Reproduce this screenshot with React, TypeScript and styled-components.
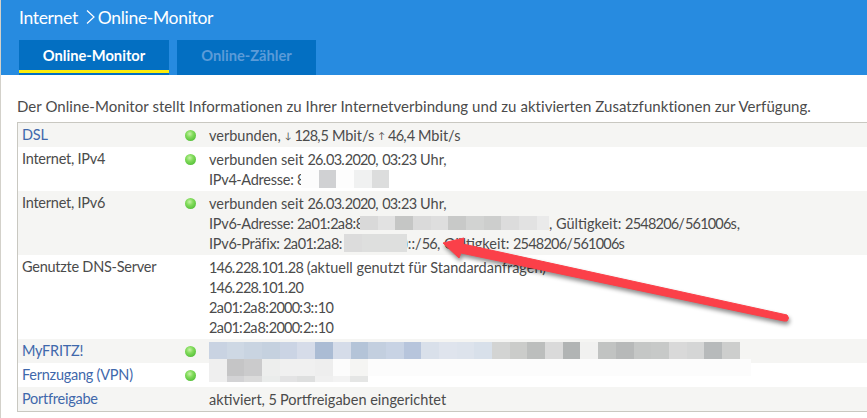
import React from 'react';
import styled, { createGlobalStyle } from 'styled-components';

const Global = createGlobalStyle`
    html, body {
        margin: 0;
        padding: 0;
        background: #fff;
        overflow: hidden;
    }
    body {
        font-family: "Lato", "Liberation Sans", sans-serif;
        color: #4b4b4b;
    }
`;

const Page = styled.div`
    position: relative;
    width: 867px;
    height: 418px;
    box-sizing: border-box;
    border-left: 1px solid #d3d1ca;
    overflow: hidden;
`;

const Header = styled.header`
    height: 75px;
    background: #278be0;
    padding: 0 0 0 18px;
    display: flex;
    flex-direction: column;
    box-sizing: border-box;
`;

const Crumbs = styled.div`
    height: 40px;
    display: flex;
    align-items: center;
    color: #fff;
    font-size: 17.5px;
    letter-spacing: -0.33px;
    padding-bottom: 6px;
    box-sizing: border-box;
`;

const Tabs = styled.nav`
    display: flex;
    gap: 8px;
`;

const Tab = styled.div<{ $active?: boolean; $w: number }>`
    width: ${p => p.$w}px;
    height: 35px;
    box-sizing: border-box;
    background: #036fc2;
    color: ${p => (p.$active ? '#fff' : '#5b9bd8')};
    font-size: 14.7px;
    font-weight: 700;
    display: flex;
    align-items: center;
    justify-content: center;
    padding-bottom: 5px;
    position: relative;
    &::after {
        content: '';
        display: ${p => (p.$active ? 'block' : 'none')};
        position: absolute;
        left: 0;
        right: 0;
        top: 30px;
        height: 3px;
        background: #fdec0b;
    }
`;

const Content = styled.main`
    padding: 22px 0 0 16px;
`;

const Intro = styled.p`
    margin: 0 0 6px;
    height: 19px;
    line-height: 19px;
    font-size: 15px;
    letter-spacing: 0.05px;
    white-space: nowrap;
`;

const Table = styled.div`
    border: 1px solid #c9c8c1;
    border-right: 0;
`;

const Row = styled.div<{ $odd?: boolean }>`
    display: grid;
    grid-template-columns: 167px 24px 1fr;
    padding: 2px 0;
    background: ${p => (p.$odd ? '#f5f5f3' : '#fff')};
`;

const Label = styled.div<{ $link?: boolean }>`
    padding-left: 4px;
    line-height: 20px;
    font-size: 14.5px;
    letter-spacing: -0.25px;
    color: ${p => (p.$link ? '#3f68ab' : '#4b4b4b')};
`;

const LedCell = styled.div`
    height: 20px;
    display: flex;
    align-items: center;
`;

const Led = styled.span`
    width: 11px;
    height: 11px;
    border-radius: 50%;
    background: radial-gradient(circle at 42% 35%, #c6f2a8 0, #83dc5c 35%, #58c23c 75%, #4aa938 100%);
`;

const Values = styled.div`
    min-width: 0;
`;

const Line = styled.div`
    height: 20px;
    display: flex;
    align-items: center;
    font-size: 14.5px;
    white-space: pre;
`;

const Digits = styled.span`
    letter-spacing: -0.8px;
`;

const ArrowGlyph = styled.span`
    font-size: 9px;
    margin: 0 3px 0 4px;
`;

// text that runs on under the blur, the blur is painted over its end
const Lead = styled.span<{ $w: number }>`
    flex: none;
    width: ${p => p.$w}px;
    letter-spacing: -0.25px;
`;

const Tail = styled.span`
    margin-left: -3px;
`;

const Mosaic = styled.span<{ $h: number }>`
    position: relative;
    display: flex;
    flex: none;
    height: ${p => p.$h}px;
    overflow: hidden;
`;

const Tile = styled.span<{ $w?: number }>`
    flex: none;
    width: ${p => p.$w ?? 17.7}px;
    height: 100%;
`;

const Stack = styled.div`
    display: flex;
    flex-direction: column;
    margin-top: -6px;
    position: relative;
    height: 24px;
`;

const Arrow = styled.svg`
    position: absolute;
    left: -1px;
    top: 0;
    width: 867px;
    height: 418px;
    pointer-events: none;
    filter: drop-shadow(1px 3px 2px rgba(0, 0, 0, 0.45));
`;

const Num = ({ children }: { children: string }) => (
    <span>
        {children.split(/(\d+)/).map((part, i) => (i % 2 ? <Digits key={i}>{part}</Digits> : part))}
    </span>
);

const Tiles = ({ colors, h, widths }: { colors: string[]; h: number; widths?: number[] }) => (
    <Mosaic $h={h}>
        {colors.map((c, i) => (
            <Tile key={i} $w={widths?.[i]} style={{ background: c }} />
        ))}
    </Mosaic>
);

const fritz = [
    '#c9d3e2', '#ced8e4', '#c9d4e1', '#c5d1df', '#cbd4e4', '#d6dce9', '#abbcd4', '#d5dce9', '#b4c4d8', '#c3cfdf',
    '#c8d3e4', '#b7c5dc', '#d9e0ea', '#dfe4ed', '#dde3ec', '#d8e0ea', '#d3d4d3', '#cbccca', '#bcbebd', '#dadada',
    '#b1b4b4', '#f1f1f0', '#c1c3c2', '#b7b9b9', '#c5c7c6', '#c7c9c8', '#d9d9d9', '#d5d6d6', '#b7babb', '#cdcecd',
];

export default function App() {
    return (
        <Page>
            <Global />
            <Header>
                <Crumbs>
                    Internet
                    <svg width="12" height="16" viewBox="0 0 12 16" style={{ margin: '0 1px 0 7px' }}>
                        <path d="M2 1.5 L9 8 L2 14.5" fill="none" stroke="#fff" strokeWidth="1.2" />
                    </svg>
                    Online-Monitor
                </Crumbs>
                <Tabs>
                    <Tab $active $w={150}>Online-Monitor</Tab>
                    <Tab $w={139}>Online-Zähler</Tab>
                </Tabs>
            </Header>
            <Content>
                <Intro>Der Online-Monitor stellt Informationen zu Ihrer Internetverbindung und zu aktivierten Zusatzfunktionen zur Verfügung.</Intro>
                <Table>
                    <Row $odd>
                        <Label $link>DSL</Label>
                        <LedCell><Led /></LedCell>
                        <Values>
                            <Line>
                                verbunden,<ArrowGlyph>↓</ArrowGlyph><Num>128,5 Mbit/s</Num><ArrowGlyph>↑</ArrowGlyph><Num>46,4 Mbit/s</Num>
                            </Line>
                        </Values>
                    </Row>
                    <Row>
                        <Label>Internet, IPv4</Label>
                        <LedCell><Led /></LedCell>
                        <Values>
                            <Line><Num>verbunden seit 26.03.2020, 03:23 Uhr,</Num></Line>
                            <Line>
                                <Lead $w={92}><Num>IPv4-Adresse: 8</Num></Lead>
                                <Tiles h={18} colors={['#fcfcfc', '#d0d1d3', '#fdfdfd', '#f0f1f1', '#dcdddd']} />
                            </Line>
                        </Values>
                    </Row>
                    <Row $odd>
                        <Label>Internet, IPv6</Label>
                        <LedCell><Led /></LedCell>
                        <Values>
                            <Line><Num>verbunden seit 26.03.2020, 03:23 Uhr,</Num></Line>
                            <Line>
                                <Lead $w={151}><Num>IPv6-Adresse: 2a01:2a8:8</Num></Lead>
                                <Tiles
                                    h={14}
                                    colors={['#d9d9d9', '#e2e2e2', '#c5c6c5', '#dadada', '#dedede', '#c8c9c8', '#d2d3d2', '#cdcecd', '#dcdcdc', '#e2e2e2', '#eaeaea']}
                                    widths={[18, 17, 18, 18, 17, 18, 18, 17, 18, 18, 12]}
                                />
                                <Num>, Gültigkeit: 2548206/561006s,</Num>
                            </Line>
                            <Line>
                                <Lead $w={135}><Num>IPv6-Präfix: 2a01:2a8:</Num></Lead>
                                <Tiles h={18} colors={['#dcdcdc', '#dedfde']} widths={[18, 45]} />
                                <Tail><Num>)::/56, Gültigkeit: 2548206/561006s</Num></Tail>
                            </Line>
                        </Values>
                    </Row>
                    <Row>
                        <Label>Genutzte DNS-Server</Label>
                        <LedCell />
                        <Values>
                            <Line><Num>146.228.101.28 (aktuell genutzt für Standardanfragen)</Num></Line>
                            <Line><Num>146.228.101.20</Num></Line>
                            <Line><Num>2a01:2a8:2000:3::10</Num></Line>
                            <Line><Num>2a01:2a8:2000:2::10</Num></Line>
                        </Values>
                    </Row>
                    <Row $odd>
                        <Label $link>MyFRITZ!</Label>
                        <LedCell><Led /></LedCell>
                        <Values>
                            <Line><Tiles h={18} colors={fritz} /></Line>
                        </Values>
                    </Row>
                    <Row>
                        <Label $link>Fernzugang (VPN)</Label>
                        <LedCell><Led /></LedCell>
                        <Values>
                            <Stack>
                                <Tiles
                                    h={17}
                                    colors={['#efefef', '#c5c5c6', '#cbcbcc', '#edeeed', '#f0f0f0', '#f0f0f0', '#eeeeee', '#fcfcfc', '#f5f5f3', '#fcfcfc']}
                                    widths={[18, 17, 18, 18, 17, 18, 18, 17, 18, 383]}
                                />
                                <Tiles
                                    h={6}
                                    colors={['#efefef', '#d3d3d5', '#dbdbdb', '#eaeceb', '#e3e3e4', '#dedfdf', '#f0f0f0', '#f3f3f3', '#e5e6e5']}
                                    widths={[18, 17, 18, 18, 17, 18, 18, 17, 18]}
                                />
                            </Stack>
                        </Values>
                    </Row>
                    <Row $odd>
                        <Label $link>Portfreigabe</Label>
                        <LedCell />
                        <Values>
                            <Line><Num>aktiviert, 5 Portfreigaben eingerichtet</Num></Line>
                        </Values>
                    </Row>
                </Table>
            </Content>
            <Arrow viewBox="0 0 867 418">
                <path
                    d="M443 243 L464 238 L463 244 L787 315 Q790 318 787 321 L784 321 L461 253 L459 258 Z"
                    fill="#fb4049"
                    stroke="#fb4049"
                    strokeWidth="1"
                    strokeLinejoin="round"
                />
            </Arrow>
        </Page>
    );
}
